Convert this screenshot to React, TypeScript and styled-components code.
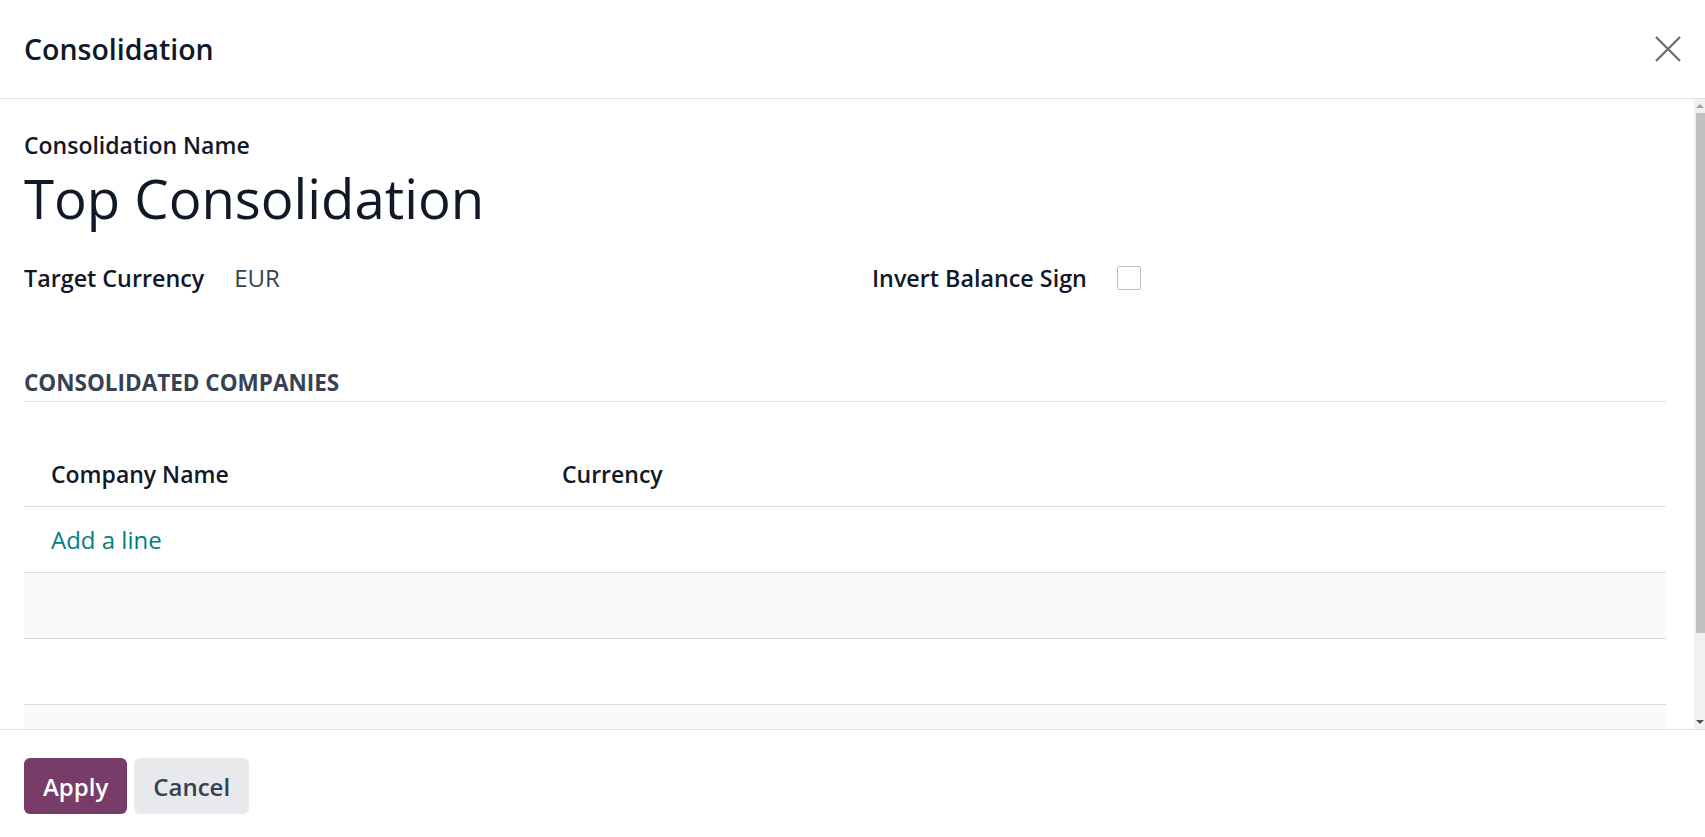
import React from 'react';
import styled, {createGlobalStyle} from 'styled-components';

const GlobalStyle = createGlobalStyle`
    html, body {
        margin: 0;
        padding: 0;
        background: #ffffff;
    }
    body {
        font-family: "Open Sans", "Noto Sans", sans-serif;
        color: #111827;
    }
    * {
        box-sizing: border-box;
    }
`;

const emptyRows = 3;

const App = () => {
    return (
        <>
            <GlobalStyle />
            <Dialog>
                <Header>
                    <Title>Consolidation</Title>
                    <CloseButton aria-label="Close">
                        <svg width="26" height="26" viewBox="0 0 26 26">
                            <path d="M1 1 L25 25 M25 1 L1 25" stroke="#6b6b6b" strokeWidth="2.2" fill="none" />
                        </svg>
                    </CloseButton>
                </Header>

                <BodyArea>
                    <Body>
                        <NameLabel>Consolidation Name</NameLabel>
                        <NameValue>Top Consolidation</NameValue>

                        <FieldsRow>
                            <Field>
                                <FieldLabel>Target Currency</FieldLabel>
                                <FieldValue>EUR</FieldValue>
                            </Field>
                            <Field>
                                <FieldLabel>Invert Balance Sign</FieldLabel>
                                <Checkbox type="checkbox" />
                            </Field>
                        </FieldsRow>

                        <SectionTitle>Consolidated Companies</SectionTitle>

                        <Table>
                            <HeadRow>
                                <HeadCell>Company Name</HeadCell>
                                <HeadCell>Currency</HeadCell>
                            </HeadRow>
                            <Row striped={false}>
                                <Cell>
                                    <AddLine href="#">Add a line</AddLine>
                                </Cell>
                                <Cell />
                            </Row>
                            {Array.from({length: emptyRows}).map((_, i) => (
                                <Row key={i} striped={i % 2 === 0}>
                                    <Cell />
                                    <Cell />
                                </Row>
                            ))}
                        </Table>
                    </Body>

                    <ScrollBar>
                        <ScrollArrow direction="up" />
                        <ScrollThumb />
                        <ScrollArrow direction="down" />
                    </ScrollBar>
                </BodyArea>

                <Footer>
                    <Button variant="primary">Apply</Button>
                    <Button variant="secondary">Cancel</Button>
                </Footer>
            </Dialog>
        </>
    );
};

export default App;


const Dialog = styled.div`
    height: 100vh;
    display: flex;
    flex-direction: column;
    background: #ffffff;
`;

const Header = styled.header`
    flex: none;
    height: 99px;
    display: flex;
    align-items: center;
    justify-content: space-between;
    padding: 0 24px;
    border-bottom: 1px solid #dee2e6;
`;

const Title = styled.h4`
    margin: 0;
    font-size: 28.5px;
    line-height: 1.2;
    font-weight: 600;
    color: #111827;
`;

const CloseButton = styled.button`
    display: flex;
    width: 26px;
    height: 26px;
    padding: 0;
    border: none;
    background: none;
    cursor: pointer;
`;

const BodyArea = styled.div`
    flex: 1;
    min-height: 0;
    display: flex;
`;

const Body = styled.main`
    flex: 1;
    min-width: 0;
    overflow: hidden;
    padding: 30px 28px 62px 24px;
`;

const ScrollBar = styled.div`
    flex: none;
    width: 11px;
    display: flex;
    flex-direction: column;
    justify-content: space-between;
    background: #f1f1f1;
`;

const ScrollArrow = styled.div<{direction: 'up' | 'down'}>`
    height: 14px;
    display: flex;
    align-items: center;
    justify-content: center;

    &::before {
        content: "";
        width: 0;
        height: 0;
        border-left: 4px solid transparent;
        border-right: 4px solid transparent;
        ${props => props.direction === 'up'
            ? 'border-bottom: 4px solid #a3a3a3;'
            : 'border-top: 4px solid #505050;'}
    }
`;

const ScrollThumb = styled.div`
    height: 520px;
    margin: 0 0 auto 2px;
    background: #c1c1c1;
`;

const NameLabel = styled.div`
    font-size: 23px;
    line-height: 33px;
    font-weight: 600;
    color: #111827;
`;

const NameValue = styled.h1`
    margin: 3px 0 0;
    font-size: 54.5px;
    line-height: 66px;
    font-weight: 400;
    color: #111827;
`;

const FieldsRow = styled.div`
    display: grid;
    grid-template-columns: 1fr 1fr;
    column-gap: 54px;
    margin-top: 30px;
`;

const Field = styled.div`
    display: flex;
    align-items: center;
    gap: 30px;
    height: 34px;
`;

const FieldLabel = styled.label`
    font-size: 23.3px;
    line-height: 34px;
    font-weight: 600;
    color: #111827;
`;

const FieldValue = styled.span`
    font-size: 24px;
    line-height: 34px;
    color: #374151;
`;

const Checkbox = styled.input`
    appearance: none;
    margin: 0;
    width: 24px;
    height: 24px;
    border: 1px solid #bdbdbd;
    border-radius: 2px;
    background: #ffffff;
`;

const SectionTitle = styled.h3`
    margin: 73px 0 0;
    padding-bottom: 3px;
    font-size: 22.5px;
    line-height: 30px;
    font-weight: 700;
    text-transform: uppercase;
    color: #374151;
    border-bottom: 1px solid #e3e4e6;
`;

const Table = styled.div`
    margin-top: 39px;
`;

const HeadRow = styled.div`
    display: grid;
    grid-template-columns: 511px 1fr;
    align-items: center;
    height: 66px;
    border-bottom: 1px solid #d8dadd;
`;

const HeadCell = styled.div`
    padding-left: 27px;
    font-size: 23px;
    font-weight: 600;
    color: #111827;
`;

const Row = styled.div<{striped: boolean}>`
    display: grid;
    grid-template-columns: 511px 1fr;
    align-items: center;
    height: 66px;
    border-bottom: 1px solid #d8dadd;
    background: ${props => props.striped ? '#fafafb' : '#ffffff'};
`;

const Cell = styled.div`
    padding-left: 27px;
    font-size: 24px;
`;

const AddLine = styled.a`
    color: #017e84;
    text-decoration: none;
`;

const Footer = styled.footer`
    flex: none;
    height: 108px;
    display: flex;
    align-items: flex-start;
    gap: 7px;
    padding: 28px 24px 0;
    border-top: 1px solid #dee2e6;
`;

const Button = styled.button<{variant: 'primary' | 'secondary'}>`
    height: 56px;
    padding: 0 19px;
    border: none;
    border-radius: 6px;
    font-family: inherit;
    font-size: 24px;
    font-weight: 600;
    cursor: pointer;
    color: ${props => props.variant === 'primary' ? '#ffffff' : '#374151'};
    background: ${props => props.variant === 'primary' ? '#773c67' : '#e7e9ed'};
`;
